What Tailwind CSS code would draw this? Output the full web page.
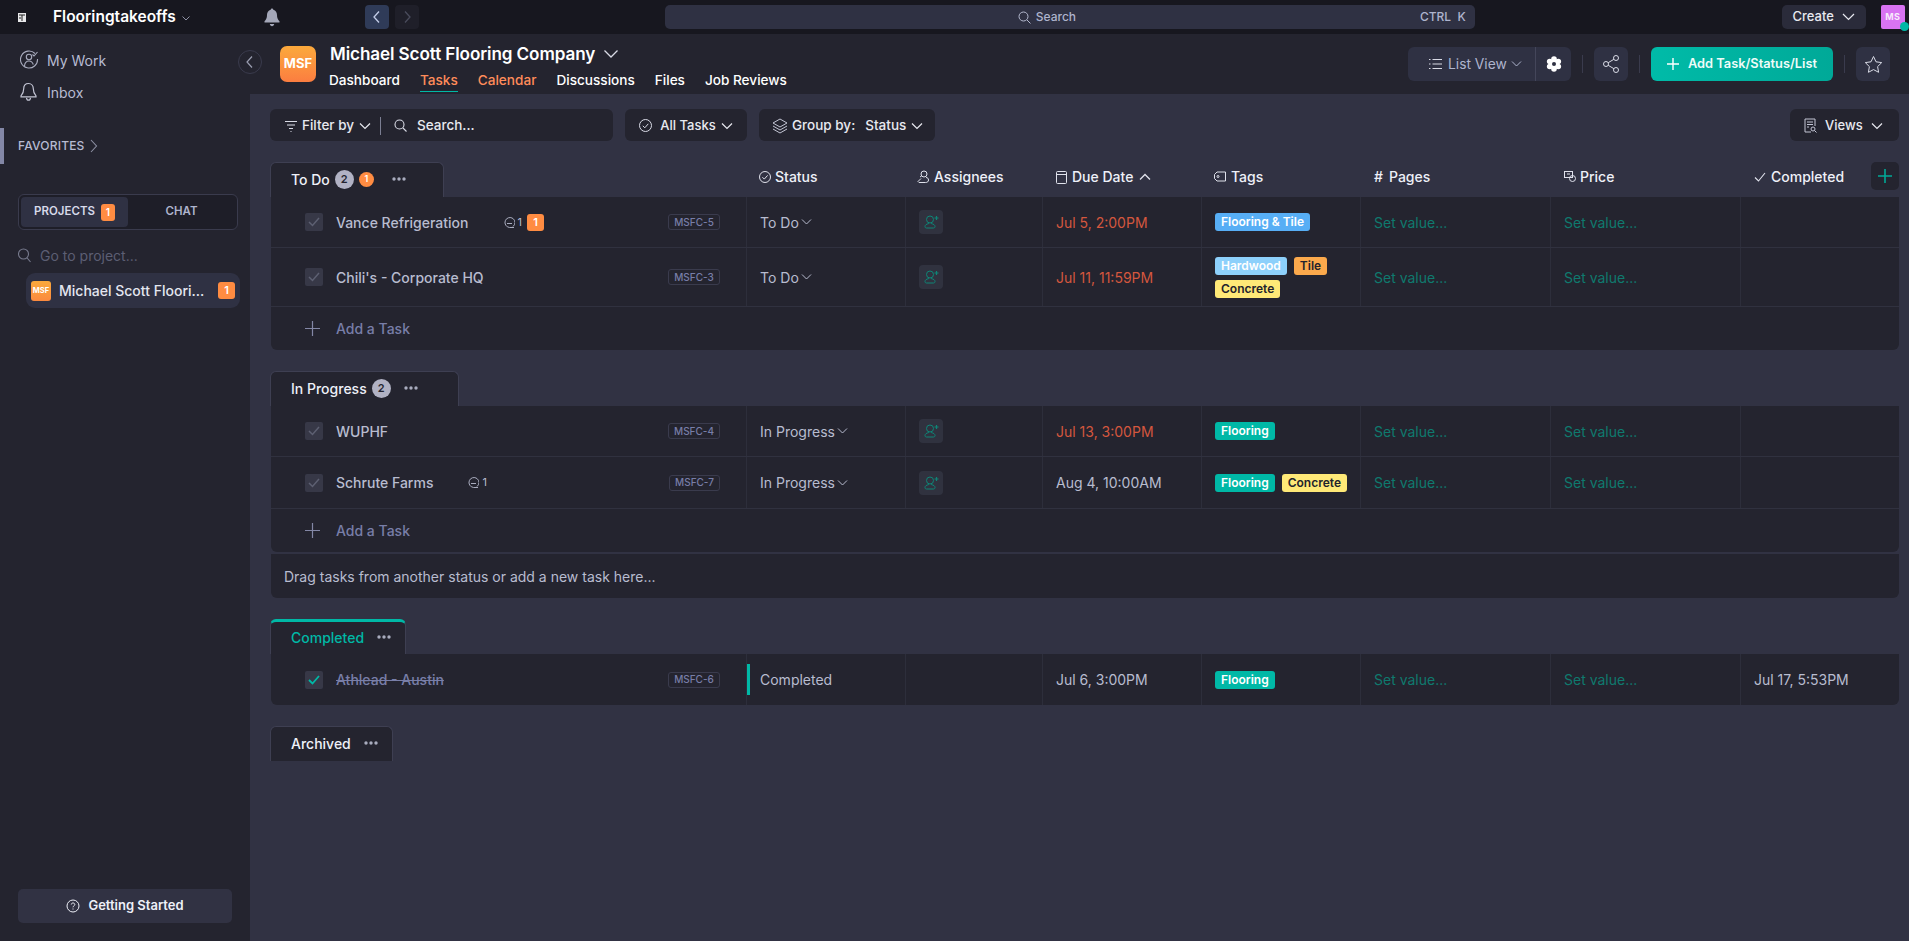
<!DOCTYPE html>
<html lang="en">
<head>
<meta charset="utf-8">
<title>Flooringtakeoffs</title>
<script src="https://cdn.jsdelivr.net/npm/@tailwindcss/browser@4"></script>
</head>
<body class="m-0 bg-[#313243]">
<div class="w-[1909px] h-[941px] overflow-hidden flex flex-col font-['Inter','Noto_Sans',sans-serif] text-[14px] text-white">

  <!-- top bar -->
  <div class="h-[34px] shrink-0 bg-[#17171f] flex items-center relative">
    <svg class="ml-[18px] w-[8px] h-[9px]" viewBox="0 0 8 9"><rect width="8" height="9" fill="#e8e8ea"/><path d="M1 2h6M4 2v6M1 5h2" stroke="#222" stroke-width="1"/></svg>
    <span class="ml-[27px] text-[15.500px] font-semibold leading-none">Flooringtakeoffs</span>
    <svg class="ml-[5px] w-[10px] h-[10px] mt-[2px]" viewBox="0 0 10 10" fill="none" stroke="#8d90a3" stroke-width="1"><path d="M1.500 3.500 5 7l3.500-3.500"/></svg>
    <svg class="ml-[73px] w-[16px] h-[19px]" viewBox="0 0 16 19" fill="#a4a7b8"><path d="M8 0.500c.8 0 1.300.6 1.300 1.300 2.500.6 3.700 2.700 3.700 5.200 0 3 .8 4.500 2.500 6.200v1.300H.5v-1.300C2.200 11.500 3 10 3 7c0-2.500 1.200-4.600 3.700-5.200C6.700 1.100 7.200.5 8 .5z"/><path d="M5.800 16h4.400c-.2 1.300-1.100 2.200-2.200 2.200S6 17.300 5.800 16z"/></svg>
    <div class="ml-[85px] w-[24px] h-[24px] rounded-[4px] bg-[#2f3b58] flex items-center justify-center">
      <svg class="w-[14px] h-[14px]" viewBox="0 0 14 14" fill="none" stroke="#c3cde8" stroke-width="1.300"><path d="M9 1.500 4 7l5 5.500"/></svg>
    </div>
    <div class="ml-[6px] w-[24px] h-[24px] rounded-[4px] bg-[#1f1f29] flex items-center justify-center">
      <svg class="w-[14px] h-[14px]" viewBox="0 0 14 14" fill="none" stroke="#4a4c5c" stroke-width="1.300"><path d="M5 1.500 10 7l-5 5.500"/></svg>
    </div>
    <div class="ml-[246px] w-[810px] h-[24px] rounded-[5px] bg-[#2f3143] flex items-center relative">
      <svg class="ml-[353px] w-[13px] h-[13px]" viewBox="0 0 13 13" fill="none" stroke="#b4b9cf" stroke-width="1"><circle cx="5.500" cy="5.500" r="4.500"/><path d="m9 9 3.500 3.500"/></svg>
      <span class="ml-[5px] text-[12px] font-medium text-[#aeb4cd]">Search</span>
      <span class="ml-auto mr-[9px] text-[12px] font-medium text-[#aeb4cd]">CTRL&nbsp;&nbsp;K</span>
    </div>
    <div class="ml-[307px] w-[84px] h-[24px] rounded-[5px] bg-[#2a2b3a] flex items-center justify-center gap-[8px]">
      <span class="text-[13px] font-medium text-[#e8e9f0]">Create</span>
      <svg class="w-[13px] h-[10px]" viewBox="0 0 13 10" fill="none" stroke="#e8e9f0" stroke-width="1.200"><path d="m1 2 5.500 5.500L12 2"/></svg>
    </div>
    <div class="ml-[15px] w-[24px] h-[24px] rounded-[2px] bg-[#d873f2] flex items-center justify-center relative text-[9px] font-bold tracking-[0.4px] text-[#f7e9fc]">MS
      <span class="absolute -right-[4px] bottom-[-2px] w-[9px] h-[9px] rounded-full bg-[#00b8a6]"></span>
    </div>
  </div>

  <div class="flex flex-1 min-h-0">
    <!-- sidebar -->
    <aside class="w-[250px] shrink-0 bg-[#24242f] flex flex-col relative">
      <div class="h-[52px] pl-[20px] flex items-center gap-[8px]">
        <svg class="w-[19px] h-[20px]" viewBox="0 0 19 20" fill="none" stroke="#a9acbe" stroke-width="1.100"><path d="M15 3.500A8.500 8.500 0 1 0 17.500 9"/><circle cx="9" cy="7" r="2.700"/><path d="M4.500 16c.3-3.500 2-5 4.500-5 2 0 3.500 1.200 4.300 3.500"/><path d="m12.500 4.500 1.500 1.500 3.500-4"/></svg>
        <span class="text-[#b7bbd2] text-[14px]">My Work</span>
      </div>
      <div class="h-[28px] -mt-[8px] pl-[20px] flex items-center gap-[10px]">
        <svg class="w-[17px] h-[20px]" viewBox="0 0 17 20" fill="none" stroke="#c3c5d4" stroke-width="1.200"><path d="M8.500 1.500c-3 0-4.800 2.300-4.800 5.300 0 3.500-.9 5.200-2.700 7v1h15v-1c-1.800-1.800-2.700-3.500-2.700-7 0-3-1.800-5.300-4.800-5.300z"/><path d="M6.500 15.800c.2 1.500 1 2.400 2 2.400s1.800-.9 2-2.400"/></svg>
        <span class="text-[#b7bbd2] text-[14px]">Inbox</span>
      </div>
      <div class="mt-[22px] h-[36px] border-l-[4px] border-[#8387a6] pl-[14px] flex items-center gap-[4px]">
        <span class="text-[12px] font-medium text-[#b7bbd2] tracking-[0.2px]">FAVORITES</span>
        <svg class="w-[9px] h-[14px]" viewBox="0 0 9 14" fill="none" stroke="#8d90a3" stroke-width="1.100"><path d="m2 1 5.500 6L2 13"/></svg>
      </div>
      <div class="mt-[30px] ml-[18px] w-[220px] h-[36px] rounded-[6px] border border-[#3a3b4d] bg-[#1e1e28] p-[2px] flex">
        <div class="w-[107px] h-full rounded-[4px] bg-[#2f3143] flex items-center justify-center gap-[6px] text-[11.500px] font-semibold text-[#d7daea]">PROJECTS
          <span class="w-[14px] h-[17px] rounded-[3px] bg-[#ff8c42] text-white text-[10px] flex items-center justify-center font-semibold">1</span>
        </div>
        <div class="flex-1 flex items-center justify-center text-[11.500px] font-semibold text-[#aeb4cd]">CHAT</div>
      </div>
      <div class="mt-[15px] ml-[18px] h-[20px] flex items-center gap-[9px]">
        <svg class="w-[13px] h-[15px]" viewBox="0 0 13 15" fill="none" stroke="#777a8d" stroke-width="1.100"><circle cx="5.500" cy="6" r="5"/><path d="m9.200 10 3.300 4"/></svg>
        <span class="text-[#5c5e73] text-[14px]">Go to project...</span>
      </div>
      <div class="mt-[8px] ml-[26px] w-[214px] h-[35px] rounded-[9px] bg-[#2f3143] flex items-center pl-[5px] pr-[5px]">
        <div class="w-[20px] h-[20px] rounded-[3px] bg-linear-to-b from-[#fba93c] to-[#fb8a3f] text-[7.500px] font-bold flex items-center justify-center">MSF</div>
        <span class="ml-[8px] text-[14px] font-medium text-[#e4e6f0] whitespace-nowrap">Michael Scott Floori...</span>
        <span class="ml-auto w-[17px] h-[17px] rounded-[3px] bg-[#ff8c42] text-[11px] font-semibold flex items-center justify-center">1</span>
      </div>
      <div class="mt-auto mb-[18px] ml-[18px] w-[214px] h-[34px] rounded-[5px] bg-[#313243] flex items-center justify-center gap-[8px] text-[13px] font-semibold text-[#eef0f8]">
        <svg class="w-[14px] h-[14px]" viewBox="0 0 14 14" fill="none" stroke="#eef0f8" stroke-width="1"><circle cx="7" cy="7" r="6"/><path d="M5.300 5.500C5.400 4.500 6 4 7 4s1.800.6 1.800 1.500c0 1.300-1.800 1.400-1.800 2.800"/><path d="M7 9.500v1"/></svg>
        Getting Started
      </div>
      <div class="absolute left-[238px] top-[16px] w-[24px] h-[24px] rounded-full border border-[#3a3b4d] bg-[#24242f] flex items-center justify-center">
        <svg class="w-[10px] h-[14px]" viewBox="0 0 10 14" fill="none" stroke="#9a9db0" stroke-width="1.200"><path d="M7 1.500 2 7l5 5.500"/></svg>
      </div>
    </aside>

    <div class="flex-1 min-w-0 flex flex-col">
      <!-- project header -->
      <header class="h-[60px] shrink-0 bg-[#24242f] flex items-start">
        <div class="ml-[30px] mt-[12px] w-[36px] h-[36px] rounded-[7px] bg-linear-to-b from-[#fba93c] to-[#fb7d40] flex items-center justify-center text-[13px] font-bold">MSF</div>
        <div class="ml-[14px] mt-[8px]">
          <div class="flex items-center h-[24px] gap-[8px]">
            <span class="text-[17.100px] font-semibold tracking-[-0.1px]">Michael Scott Flooring Company</span>
            <svg class="w-[16px] h-[10px]" viewBox="0 0 16 10" fill="none" stroke="#d9dbe6" stroke-width="1.300"><path d="m1.500 1.500 6.500 6.500 6.500-6.500"/></svg>
          </div>
          <nav class="flex mt-[2px] text-[13.600px] font-medium h-[24px] gap-[20px] -ml-[1px]">
            <span class="pt-[2px]">Dashboard</span>
            <span class="pt-[2px] h-[24px] text-[#ff8c5a] border-b-[1px] border-[#00b8a6]">Tasks</span>
            <span class="pt-[2px] text-[#ff8c5a]">Calendar</span>
            <span class="pt-[2px]">Discussions</span>
            <span class="pt-[2px]">Files</span>
            <span class="pt-[2px]">Job Reviews</span>
          </nav>
        </div>
        <div class="ml-auto mt-[13px] flex items-center h-[34px] pr-[19px]">
          <div class="w-[163px] h-[34px] rounded-[6px] bg-[#2f3143] flex items-center">
            <div class="w-[128px] h-full border-r border-[#44465a] flex items-center pl-[21px] gap-[6px] text-[#aeb4cd] text-[13.800px]">
              <svg class="w-[13px] h-[12px]" viewBox="0 0 13 12" fill="none" stroke="#d9dbe6" stroke-width="1.200"><path d="M3.500 1.500H13M3.500 6H13M3.500 10.500H13M0 1.500h1.500M0 6h1.500M0 10.500h1.500"/></svg>
              <span>List View</span>
              <svg class="-ml-[2px] w-[11px] h-[8px]" viewBox="0 0 11 8" fill="none" stroke="#aeb4cd" stroke-width="1"><path d="m1 1.500 4.500 4.500L10 1.500"/></svg>
            </div>
            <div class="flex-1 flex items-center justify-center">
              <svg class="w-[16px] h-[16px]" viewBox="0 0 16 16" fill="#fff"><circle cx="8" cy="8" r="5.200"/><circle cx="8" cy="3" r="2.800"/><circle cx="8" cy="13" r="2.800"/><circle cx="3.700" cy="5.500" r="2.800"/><circle cx="12.300" cy="5.500" r="2.800"/><circle cx="3.700" cy="10.500" r="2.800"/><circle cx="12.300" cy="10.500" r="2.800"/><circle cx="8" cy="8" r="2" fill="#2f3143"/></svg>
            </div>
          </div>
          <span class="mx-[11px] w-px h-[18px] bg-[#3a3b4d]"></span>
          <div class="w-[34px] h-[34px] rounded-[6px] bg-[#2f3143] flex items-center justify-center">
            <svg class="w-[16px] h-[18px]" viewBox="0 0 16 18" fill="none" stroke="#d9dbe6" stroke-width="1"><circle cx="3" cy="9" r="2.500"/><circle cx="13" cy="3" r="2.500"/><circle cx="13" cy="15" r="2.500"/><path d="m5.200 7.700 5.700-3.400M5.200 10.300l5.700 3.400"/></svg>
          </div>
          <span class="mx-[11px] w-px h-[18px] bg-[#3a3b4d]"></span>
          <div class="w-[182px] h-[34px] rounded-[6px] bg-linear-to-r from-[#00bba8] to-[#00a998] flex items-center pl-[16px] gap-[9px] text-[12.800px] font-semibold text-[#eefcf9]">
            <svg class="w-[12px] h-[12px]" viewBox="0 0 12 12" fill="none" stroke="#fff" stroke-width="1.400"><path d="M6 0v12M0 6h12"/></svg>
            Add Task/Status/List
          </div>
          <span class="mx-[11px] w-px h-[18px] bg-[#3a3b4d]"></span>
          <div class="w-[34px] h-[34px] rounded-[6px] bg-[#2f3143] flex items-center justify-center">
            <svg class="w-[19px] h-[19px]" viewBox="0 0 19 19" fill="none" stroke="#d9dbe6" stroke-width="1"><path d="m9.500 1.500 2.500 5.300 5.700.8-4.100 4 1 5.700-5.100-2.700-5.100 2.700 1-5.700-4.100-4 5.700-.8z"/></svg>
          </div>
        </div>
      </header>

      <!-- main -->
      <main class="flex-1 min-h-0 pl-[20px] pr-[10px] pt-[15px]">
        <!-- filter bar -->
        <div class="flex h-[32px] gap-[12px] text-[13px] font-medium">
          <div class="w-[343px] rounded-[6px] bg-[#24242f] flex items-center pl-[15px] pt-[1px] text-[13.500px]">
            <svg class="w-[12px] h-[12px]" viewBox="0 0 12 12" fill="none" stroke="#d9dbe6" stroke-width="1"><path d="M0 1.500h12M2 5h8M4 8.500h4M5.500 11.500h1"/></svg>
            <span class="ml-[5px] text-[#e8e9f0]">Filter by</span>
            <svg class="ml-[5px] w-[12px] h-[8px]" viewBox="0 0 12 8" fill="none" stroke="#e8e9f0" stroke-width="1.200"><path d="m1 1.500 5 5 5-5"/></svg>
            <span class="ml-[9px] w-px h-[18px] bg-[#7b7e92]"></span>
            <svg class="ml-[13px] w-[13px] h-[13px]" viewBox="0 0 13 13" fill="none" stroke="#d9dbe6" stroke-width="1.100"><circle cx="5.500" cy="5.500" r="4.500"/><path d="m9 9 3.500 3.500"/></svg>
            <span class="ml-[10px] text-[#e8e9f0]">Search...</span>
          </div>
          <div class="w-[122px] rounded-[6px] bg-[#24242f] flex items-center justify-center gap-[5px] pt-[1px] text-[#e8e9f0]">
            <svg class="w-[13px] h-[13px] mr-[1px]" viewBox="0 0 13 13" fill="none" stroke="#d9dbe6" stroke-width="1"><circle cx="6.500" cy="6.500" r="6"/><path d="m3.800 6.800 2 2 3.500-4"/></svg>
            <span class="ml-[2px]">All Tasks</span>
            <svg class="w-[12px] h-[8px]" viewBox="0 0 12 8" fill="none" stroke="#e8e9f0" stroke-width="1.200"><path d="m1 1.500 5 5 5-5"/></svg>
          </div>
          <div class="w-[176px] rounded-[6px] bg-[#24242f] flex items-center pl-[13px] pt-[1px] text-[13.500px] text-[#e8e9f0]">
            <svg class="w-[16px] h-[16px]" viewBox="0 0 16 16" fill="none" stroke="#c3c5d4" stroke-width="1"><path d="M8 1 15 5 8 9 1 5zM1 8l7 4 7-4M1 11l7 4 7-4"/></svg>
            <span class="ml-[4px]">Group by:</span>
            <span class="ml-[10px]">Status</span>
            <svg class="ml-[5px] w-[12px] h-[8px]" viewBox="0 0 12 8" fill="none" stroke="#e8e9f0" stroke-width="1.200"><path d="m1 1.500 5 5 5-5"/></svg>
          </div>
          <div class="ml-auto w-[109px] rounded-[6px] bg-[#24242f] flex items-center pl-[14px] pt-[1px] gap-[7px] text-[#e8e9f0]">
            <svg class="w-[13px] h-[15px]" viewBox="0 0 13 15" fill="none" stroke="#c3c5d4" stroke-width="1"><path d="M11 8V1H1v13h6M3 4h6M3 6.500h6M3 9h2"/><circle cx="9" cy="11" r="2"/><path d="m10.500 12.500 2 2"/></svg>
            <span class="ml-[1px]">Views</span>
            <svg class="w-[12px] h-[8px] ml-[1px]" viewBox="0 0 12 8" fill="none" stroke="#e8e9f0" stroke-width="1.200"><path d="m1 1.500 5 5 5-5"/></svg>
          </div>
        </div>

        <!-- To Do head -->
        <div class="mt-[21px] h-[35px] grid grid-cols-[476px_159px_137px_159px_159px_190px_190px_159px] text-[14px] font-medium text-[#eef0f8]">
          <div class="flex items-end">
            <div class="w-[174px] h-[35px] rounded-t-[6px] border-t border-x border-[#3e3f52] bg-[#24242f] flex items-center pl-[20px] pb-[2px]">
              <span>To Do</span>
              <span class="ml-[5px] w-[19px] h-[19px] rounded-full bg-[#b1b2c4] text-[#24242f] text-[11px] font-semibold flex items-center justify-center">2</span>
              <span class="ml-[5px] w-[15px] h-[15px] rounded-full bg-[#ff8c42] text-white text-[9px] font-semibold flex items-center justify-center">1</span>
              <svg class="ml-[18px] w-[14px] h-[4px]" viewBox="0 0 14 4" fill="#a9acbe"><circle cx="2" cy="2" r="1.700"/><circle cx="7" cy="2" r="1.700"/><circle cx="12" cy="2" r="1.700"/></svg>
            </div>
          </div>
          <div class="flex items-center pl-[13px] pb-[6px] gap-[4px]"><svg class="w-[12px] h-[12px]" viewBox="0 0 12 12" fill="none" stroke="#e0e2ec" stroke-width="1"><circle cx="6" cy="6" r="5.500"/><path d="m3.400 6.200 1.900 1.900 3.300-3.700"/></svg>Status</div>
          <div class="flex items-center pl-[12px] pb-[6px] gap-[5px]"><svg class="w-[12px] h-[14px]" viewBox="0 0 12 14" fill="none" stroke="#e0e2ec" stroke-width="1"><circle cx="7" cy="4" r="3"/><path d="M4 8.500 1 11.500l1 1h6.500c2 0 3-1 3-2.500s-1-2.500-2.500-2.500M4.500 6l-1.500 1"/></svg>Assignees</div>
          <div class="flex items-center pl-[14px] pb-[6px] gap-[5px]"><svg class="w-[11px] h-[14px]" viewBox="0 0 11 14" fill="none" stroke="#e0e2ec" stroke-width="1"><rect x=".5" y="1.500" width="10" height="12" rx="1"/><path d="M.5 4.500h10"/></svg>Due Date<svg class="ml-[1px] w-[12px] h-[8px]" viewBox="0 0 12 8" fill="none" stroke="#e0e2ec" stroke-width="1.300"><path d="m1 6.500 5-5 5 5"/></svg></div>
          <div class="flex items-center pl-[13px] pb-[6px] gap-[5px]"><svg class="w-[12px] h-[11px]" viewBox="0 0 12 11" fill="none" stroke="#e0e2ec" stroke-width="1"><path d="M3 1h8.500v9H3L.5 7.500v-4z"/><circle cx="4" cy="5.500" r="1"/></svg>Tags</div>
          <div class="flex items-center pl-[14px] pb-[6px] gap-[5px]"><span class="w-[10px]">#</span>Pages</div>
          <div class="flex items-center pl-[14px] pb-[6px] gap-[4px]"><svg class="w-[12px] h-[11px]" viewBox="0 0 12 11" fill="none" stroke="#e0e2ec" stroke-width="1"><rect x=".5" y=".5" width="8" height="6"/><circle cx="8.500" cy="7.500" r="3"/><path d="M3 3h3"/></svg>Price</div>
          <div class="flex items-start pl-[14px] relative">
            <div class="flex items-center h-[29px] gap-[5px]"><svg class="w-[12px] h-[10px]" viewBox="0 0 12 10" fill="none" stroke="#e0e2ec" stroke-width="1.100"><path d="m1 5.500 3.500 3.500L11 1"/></svg>Completed</div>
            <div class="absolute right-0 top-0 w-[28px] h-[28px] rounded-[5px] bg-[#24242f] flex items-center justify-center">
              <svg class="w-[14px] h-[14px]" viewBox="0 0 14 14" fill="none" stroke="#00a896" stroke-width="1.600"><path d="M7 0v14M0 7h14"/></svg>
            </div>
          </div>
        </div>

        <!-- To Do panel -->
        <div class="ml-px bg-[#24242f] rounded-b-[6px] text-[14px]">
          <div class="h-[51px] grid grid-cols-[475px_159px_137px_159px_159px_190px_190px_159px] border-b border-[#30313f]">
            <div class="flex items-center pl-[34px] pr-[26px]">
              <span class="w-[18px] h-[18px] rounded-[2px] bg-[#373847] flex items-center justify-center"><svg class="w-[12px] h-[10px]" viewBox="0 0 12 10" fill="none" stroke="#5d6072" stroke-width="1.500"><path d="m1 5 3.500 3.500L11 1"/></svg></span>
              <span class="ml-[13px] font-medium text-[#b8bccf]">Vance Refrigeration</span>
              <svg class="ml-[35px] w-[11px] h-[11px]" viewBox="0 0 11 11" fill="none" stroke="#a9acbe" stroke-width="1"><path d="M9 9.500A5 5 0 1 0 5.500 10.500H10"/><path d="M3 6.500h5"/></svg>
              <span class="ml-[3px] text-[11px] text-[#b8bccf]">1</span>
              <span class="ml-[5px] w-[17px] h-[17px] rounded-[3px] bg-[#ff8c42] text-white text-[11px] font-semibold flex items-center justify-center">1</span>
              <span class="ml-auto w-[52px] h-[16px] rounded-[3px] border border-[#3a3b4d] text-[#787ea8] text-[10px] font-medium flex items-center justify-center">MSFC-5</span>
            </div>
            <div class="flex items-center pl-[13px] gap-[2px] border-l border-[#2d2e3b] text-[#b8bccf]">To Do<svg class="w-[11px] h-[8px]" viewBox="0 0 11 8" fill="none" stroke="#b8bccf" stroke-width="1"><path d="m1 1.500 4.500 4.500L10 1.500"/></svg></div>
            <div class="flex items-center pl-[13px] border-l border-[#2d2e3b]"><span class="w-[24px] h-[24px] rounded-[4px] bg-[#30323f] flex items-center justify-center"><svg class="w-[15px] h-[14px]" viewBox="0 0 15 14" fill="none" stroke="#0e8677" stroke-width="1"><circle cx="6" cy="4.500" r="3.500"/><path d="M4.500 7.500v1.200C2.500 9 1 10 1 11.500c0 1 .6 1.500 1.500 1.500h7c.9 0 1.500-.5 1.500-1.500 0-1.500-1.500-2.500-3.500-2.800V7.500"/><path d="M12.500 1v4M10.500 3h4" stroke-width="1.200"/></svg></span></div>
            <div class="flex items-center pl-[13px] border-l border-[#2d2e3b] text-[#d4573e]">Jul 5, 2:00PM</div>
            <div class="flex items-center pl-[13px] border-l border-[#2d2e3b] text-[12px] font-semibold"><span class="px-[6px] h-[18px] rounded-[3px] bg-[#57aef5] flex items-center">Flooring &amp; Tile</span></div>
            <div class="flex items-center pl-[13px] border-l border-[#2d2e3b] text-[#0f7a6e]">Set value...</div>
            <div class="flex items-center pl-[13px] border-l border-[#2d2e3b] text-[#0f7a6e]">Set value...</div>
            <div class="border-l border-[#2d2e3b]"></div>
          </div>
          <div class="h-[59px] grid grid-cols-[475px_159px_137px_159px_159px_190px_190px_159px] border-b border-[#30313f]">
            <div class="flex items-center pl-[34px] pr-[26px]">
              <span class="w-[18px] h-[18px] rounded-[2px] bg-[#373847] flex items-center justify-center"><svg class="w-[12px] h-[10px]" viewBox="0 0 12 10" fill="none" stroke="#5d6072" stroke-width="1.500"><path d="m1 5 3.500 3.500L11 1"/></svg></span>
              <span class="ml-[13px] font-medium text-[#b8bccf]">Chili's - Corporate HQ</span>
              <span class="ml-auto w-[52px] h-[16px] rounded-[3px] border border-[#3a3b4d] text-[#787ea8] text-[10px] font-medium flex items-center justify-center">MSFC-3</span>
            </div>
            <div class="flex items-center pl-[13px] gap-[2px] border-l border-[#2d2e3b] text-[#b8bccf]">To Do<svg class="w-[11px] h-[8px]" viewBox="0 0 11 8" fill="none" stroke="#b8bccf" stroke-width="1"><path d="m1 1.500 4.500 4.500L10 1.500"/></svg></div>
            <div class="flex items-center pl-[13px] border-l border-[#2d2e3b]"><span class="w-[24px] h-[24px] rounded-[4px] bg-[#30323f] flex items-center justify-center"><svg class="w-[15px] h-[14px]" viewBox="0 0 15 14" fill="none" stroke="#0e8677" stroke-width="1"><circle cx="6" cy="4.500" r="3.500"/><path d="M4.500 7.500v1.200C2.500 9 1 10 1 11.500c0 1 .6 1.500 1.500 1.500h7c.9 0 1.500-.5 1.500-1.500 0-1.500-1.500-2.500-3.500-2.800V7.500"/><path d="M12.500 1v4M10.500 3h4" stroke-width="1.200"/></svg></span></div>
            <div class="flex items-center pl-[13px] border-l border-[#2d2e3b] text-[#d4573e]">Jul 11, 11:59PM</div>
            <div class="flex flex-col justify-center gap-[5px] pl-[13px] border-l border-[#2d2e3b] text-[12px] font-semibold">
              <div class="flex gap-[7px]">
                <span class="px-[6px] h-[18px] rounded-[3px] bg-[#8dd0fb] flex items-center">Hardwood</span>
                <span class="px-[6px] h-[18px] rounded-[3px] bg-[#fba94c] text-[#23232c] flex items-center">Tile</span>
              </div>
              <div class="flex"><span class="px-[6px] h-[18px] rounded-[3px] bg-[#ffe977] text-[#23232c] flex items-center">Concrete</span></div>
            </div>
            <div class="flex items-center pl-[13px] border-l border-[#2d2e3b] text-[#0f7a6e]">Set value...</div>
            <div class="flex items-center pl-[13px] border-l border-[#2d2e3b] text-[#0f7a6e]">Set value...</div>
            <div class="border-l border-[#2d2e3b]"></div>
          </div>
          <div class="h-[43px] flex items-center pl-[34px] gap-[17px] text-[#787ea8] font-medium">
            <svg class="w-[15px] h-[15px]" viewBox="0 0 15 15" fill="none" stroke="#8387a6" stroke-width="1.200"><path d="M7.500 0v15M0 7.500h15"/></svg>
            <span class="-ml-[1px]">Add a Task</span>
          </div>
        </div>

        <!-- In Progress -->
        <div class="mt-[21px] h-[35px] flex items-end">
          <div class="w-[189px] h-[35px] rounded-t-[6px] border-t border-x border-[#3e3f52] bg-[#24242f] flex items-center pl-[20px] pb-[2px] text-[14px] font-medium text-[#eef0f8]">
            <span>In Progress</span>
            <span class="ml-[5px] w-[19px] h-[19px] rounded-full bg-[#b1b2c4] text-[#24242f] text-[11px] font-semibold flex items-center justify-center">2</span>
            <svg class="ml-[13px] w-[14px] h-[4px]" viewBox="0 0 14 4" fill="#a9acbe"><circle cx="2" cy="2" r="1.700"/><circle cx="7" cy="2" r="1.700"/><circle cx="12" cy="2" r="1.700"/></svg>
          </div>
        </div>
        <div class="ml-px bg-[#24242f] rounded-b-[6px] text-[14px]">
          <div class="h-[51px] grid grid-cols-[475px_159px_137px_159px_159px_190px_190px_159px] border-b border-[#30313f]">
            <div class="flex items-center pl-[34px] pr-[26px]">
              <span class="w-[18px] h-[18px] rounded-[2px] bg-[#373847] flex items-center justify-center"><svg class="w-[12px] h-[10px]" viewBox="0 0 12 10" fill="none" stroke="#5d6072" stroke-width="1.500"><path d="m1 5 3.500 3.500L11 1"/></svg></span>
              <span class="ml-[13px] font-medium text-[#b8bccf]">WUPHF</span>
              <span class="ml-auto w-[52px] h-[16px] rounded-[3px] border border-[#3a3b4d] text-[#787ea8] text-[10px] font-medium flex items-center justify-center">MSFC-4</span>
            </div>
            <div class="flex items-center pl-[13px] gap-[2px] border-l border-[#2d2e3b] text-[#b8bccf]">In Progress<svg class="w-[11px] h-[8px]" viewBox="0 0 11 8" fill="none" stroke="#b8bccf" stroke-width="1"><path d="m1 1.500 4.500 4.500L10 1.500"/></svg></div>
            <div class="flex items-center pl-[13px] border-l border-[#2d2e3b]"><span class="w-[24px] h-[24px] rounded-[4px] bg-[#30323f] flex items-center justify-center"><svg class="w-[15px] h-[14px]" viewBox="0 0 15 14" fill="none" stroke="#0e8677" stroke-width="1"><circle cx="6" cy="4.500" r="3.500"/><path d="M4.500 7.500v1.200C2.500 9 1 10 1 11.500c0 1 .6 1.500 1.500 1.500h7c.9 0 1.500-.5 1.500-1.500 0-1.500-1.500-2.500-3.500-2.800V7.500"/><path d="M12.500 1v4M10.500 3h4" stroke-width="1.200"/></svg></span></div>
            <div class="flex items-center pl-[13px] border-l border-[#2d2e3b] text-[#d4573e]">Jul 13, 3:00PM</div>
            <div class="flex items-center pl-[13px] border-l border-[#2d2e3b] text-[12px] font-semibold"><span class="px-[6px] h-[18px] rounded-[3px] bg-[#00b8a6] flex items-center">Flooring</span></div>
            <div class="flex items-center pl-[13px] border-l border-[#2d2e3b] text-[#0f7a6e]">Set value...</div>
            <div class="flex items-center pl-[13px] border-l border-[#2d2e3b] text-[#0f7a6e]">Set value...</div>
            <div class="border-l border-[#2d2e3b]"></div>
          </div>
          <div class="h-[52px] grid grid-cols-[475px_159px_137px_159px_159px_190px_190px_159px] border-b border-[#30313f]">
            <div class="flex items-center pl-[34px] pr-[26px]">
              <span class="w-[18px] h-[18px] rounded-[2px] bg-[#373847] flex items-center justify-center"><svg class="w-[12px] h-[10px]" viewBox="0 0 12 10" fill="none" stroke="#5d6072" stroke-width="1.500"><path d="m1 5 3.500 3.500L11 1"/></svg></span>
              <span class="ml-[13px] font-medium text-[#b8bccf]">Schrute Farms</span>
              <svg class="ml-[35px] w-[11px] h-[11px]" viewBox="0 0 11 11" fill="none" stroke="#a9acbe" stroke-width="1"><path d="M9 9.500A5 5 0 1 0 5.500 10.500H10"/><path d="M3 6.500h5"/></svg>
              <span class="ml-[3px] text-[11px] text-[#b8bccf]">1</span>
              <span class="ml-auto w-[51px] h-[16px] rounded-[3px] border border-[#3a3b4d] text-[#787ea8] text-[10px] font-medium flex items-center justify-center">MSFC-7</span>
            </div>
            <div class="flex items-center pl-[13px] gap-[2px] border-l border-[#2d2e3b] text-[#b8bccf]">In Progress<svg class="w-[11px] h-[8px]" viewBox="0 0 11 8" fill="none" stroke="#b8bccf" stroke-width="1"><path d="m1 1.500 4.500 4.500L10 1.500"/></svg></div>
            <div class="flex items-center pl-[13px] border-l border-[#2d2e3b]"><span class="w-[24px] h-[24px] rounded-[4px] bg-[#30323f] flex items-center justify-center"><svg class="w-[15px] h-[14px]" viewBox="0 0 15 14" fill="none" stroke="#0e8677" stroke-width="1"><circle cx="6" cy="4.500" r="3.500"/><path d="M4.500 7.500v1.200C2.500 9 1 10 1 11.500c0 1 .6 1.500 1.500 1.500h7c.9 0 1.500-.5 1.500-1.500 0-1.500-1.500-2.500-3.500-2.800V7.500"/><path d="M12.500 1v4M10.500 3h4" stroke-width="1.200"/></svg></span></div>
            <div class="flex items-center pl-[13px] border-l border-[#2d2e3b] text-[#b8bccf]">Aug 4, 10:00AM</div>
            <div class="flex items-center gap-[7px] pl-[13px] border-l border-[#2d2e3b] text-[12px] font-semibold">
              <span class="px-[6px] h-[18px] rounded-[3px] bg-[#00b8a6] flex items-center">Flooring</span>
              <span class="px-[6px] h-[18px] rounded-[3px] bg-[#ffe977] text-[#23232c] flex items-center">Concrete</span>
            </div>
            <div class="flex items-center pl-[13px] border-l border-[#2d2e3b] text-[#0f7a6e]">Set value...</div>
            <div class="flex items-center pl-[13px] border-l border-[#2d2e3b] text-[#0f7a6e]">Set value...</div>
            <div class="border-l border-[#2d2e3b]"></div>
          </div>
          <div class="h-[43px] flex items-center pl-[34px] gap-[17px] text-[#787ea8] font-medium">
            <svg class="w-[15px] h-[15px]" viewBox="0 0 15 15" fill="none" stroke="#8387a6" stroke-width="1.200"><path d="M7.500 0v15M0 7.500h15"/></svg>
            <span class="-ml-[1px]">Add a Task</span>
          </div>
        </div>
        <div class="ml-px mt-[2px] h-[44px] bg-[#24242f] rounded-b-[6px] flex items-center pl-[13px] text-[14px] text-[#b8bccf]">Drag tasks from another status or add a new task here...</div>

        <!-- Completed -->
        <div class="mt-[21px] h-[35px] flex items-end">
          <div class="w-[136px] h-[35px] rounded-t-[6px] border-t-[3px] border-t-[#00b8a6] border-x border-x-[#3e3f52] bg-[#24242f] flex items-center pl-[20px] pb-[2px] text-[14px] font-medium text-[#00b8a6]">
            <span>Completed</span>
            <svg class="ml-[13px] w-[14px] h-[4px]" viewBox="0 0 14 4" fill="#a9acbe"><circle cx="2" cy="2" r="1.700"/><circle cx="7" cy="2" r="1.700"/><circle cx="12" cy="2" r="1.700"/></svg>
          </div>
        </div>
        <div class="ml-px h-[51px] grid grid-cols-[475px_159px_137px_159px_159px_190px_190px_159px] bg-[#24242f] rounded-b-[6px] text-[14px]">
          <div class="flex items-center pl-[34px] pr-[26px]">
            <span class="w-[18px] h-[18px] rounded-[2px] bg-[#373847] flex items-center justify-center"><svg class="w-[12px] h-[10px]" viewBox="0 0 12 10" fill="none" stroke="#00b8a6" stroke-width="1.800"><path d="m1 5 3.500 3.500L11 1"/></svg></span>
            <span class="ml-[13px] font-medium text-[#787ea8] line-through">Athlead - Austin</span>
            <span class="ml-auto w-[52px] h-[16px] rounded-[3px] border border-[#3a3b4d] text-[#787ea8] text-[10px] font-medium flex items-center justify-center">MSFC-6</span>
          </div>
          <div class="flex items-center pl-[13px] border-l border-[#2d2e3b] text-[#b8bccf] relative"><span class="absolute left-0 top-[10px] w-[3px] h-[31px] bg-[#00b8a6]"></span>Completed</div>
          <div class="border-l border-[#2d2e3b]"></div>
          <div class="flex items-center pl-[13px] border-l border-[#2d2e3b] text-[#b8bccf]">Jul 6, 3:00PM</div>
          <div class="flex items-center pl-[13px] border-l border-[#2d2e3b] text-[12px] font-semibold"><span class="px-[6px] h-[18px] rounded-[3px] bg-[#00b8a6] flex items-center">Flooring</span></div>
          <div class="flex items-center pl-[13px] border-l border-[#2d2e3b] text-[#0f7a6e]">Set value...</div>
          <div class="flex items-center pl-[13px] border-l border-[#2d2e3b] text-[#0f7a6e]">Set value...</div>
          <div class="flex items-center pl-[13px] border-l border-[#2d2e3b] text-[#b8bccf]">Jul 17, 5:53PM</div>
        </div>

        <!-- Archived -->
        <div class="mt-[21px] h-[35px] flex items-end">
          <div class="w-[123px] h-[35px] rounded-t-[6px] border-t border-x border-[#3e3f52] bg-[#24242f] flex items-center pl-[20px] pb-[2px] text-[14px] font-medium text-[#eef0f8]">
            <span>Archived</span>
            <svg class="ml-[13px] w-[14px] h-[4px]" viewBox="0 0 14 4" fill="#a9acbe"><circle cx="2" cy="2" r="1.700"/><circle cx="7" cy="2" r="1.700"/><circle cx="12" cy="2" r="1.700"/></svg>
          </div>
        </div>
      </main>
    </div>
  </div>
</div>
</body>
</html>
